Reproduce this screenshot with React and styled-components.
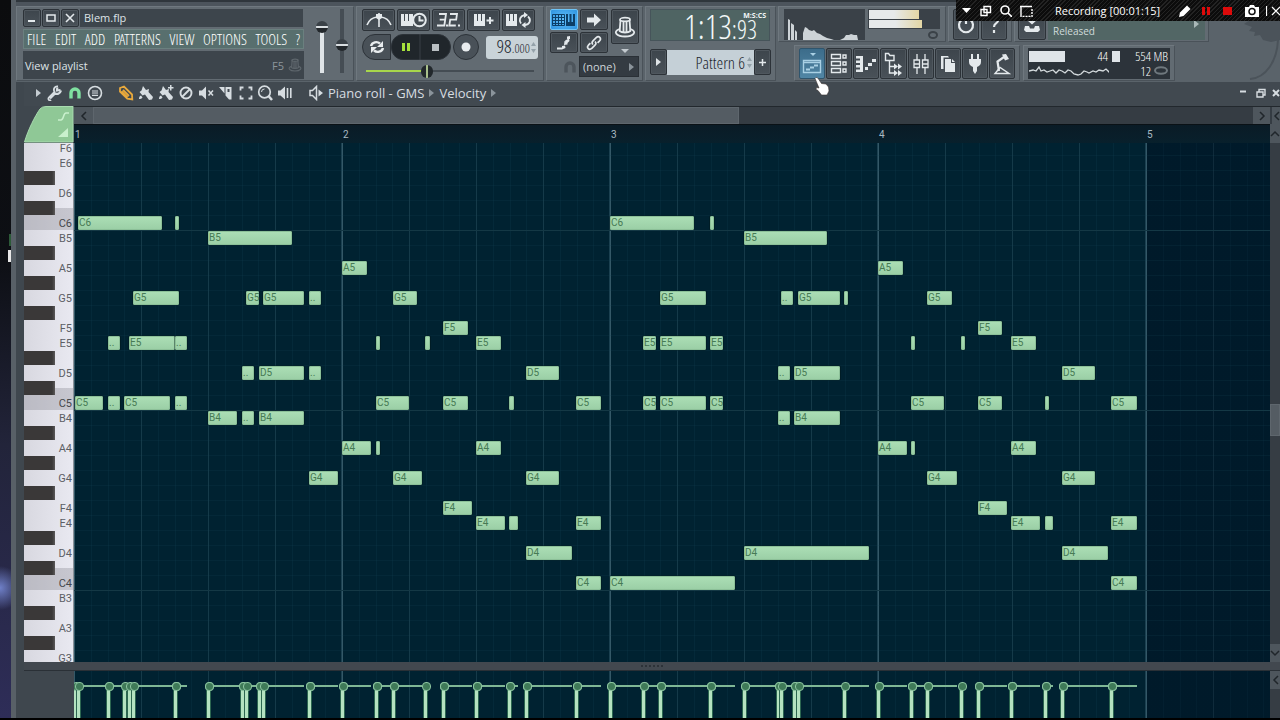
import React from 'react'
import styled, { createGlobalStyle, css } from 'styled-components'

const narrow = "'Open Sans Condensed Light', 'Open Sans ExtraCondensed', 'Noto Sans ExtraCondensed', 'Noto Sans Condensed', 'Roboto Condensed', 'Open Sans Condensed', sans-serif"
const label = "Roboto, 'Liberation Sans', sans-serif"
const ui = "'Open Sans', 'Noto Sans', sans-serif"

const GlobalStyle = createGlobalStyle`
  * { box-sizing: border-box; }
  body { margin: 0; background: #000; overflow: hidden; }
  button, input, select { margin: 0; padding: 0; border: 0; font: inherit; color: inherit; background: none; outline: none; }
  svg { display: block; flex: none; }
`

/* ---------- data ---------- */

const PITCHES = [
  'F6', 'E6', 'D#6', 'D6', 'C#6', 'C6',
  'B5', 'A#5', 'A5', 'G#5', 'G5', 'F#5', 'F5', 'E5', 'D#5', 'D5', 'C#5', 'C5',
  'B4', 'A#4', 'A4', 'G#4', 'G4', 'F#4', 'F4', 'E4', 'D#4', 'D4', 'C#4', 'C4',
  'B3', 'A#3', 'A3', 'G#3', 'G3',
]

// [start, length] at 268px per bar
const NOTES = {
  C6: [[4, 84], [101, 4], [536, 84], [636, 4]],
  B5: [[134, 84], [670, 83]],
  A5: [[268, 25], [804, 25]],
  G5: [[59, 46], [172, 13], [189, 41], [235, 12], [319, 24], [586, 46], [707, 12], [724, 42], [770, 4], [853, 25]],
  F5: [[369, 25], [904, 24]],
  E5: [[34, 12], [55, 46], [101, 12], [302, 4], [351, 5], [402, 25], [569, 13], [586, 46], [636, 13], [837, 4], [887, 4], [937, 25]],
  D5: [[168, 12], [185, 45], [235, 12], [452, 33], [704, 12], [720, 46], [988, 33]],
  C5: [[1, 28], [34, 12], [50, 46], [101, 12], [302, 33], [369, 25], [435, 5], [502, 25], [569, 13], [586, 46], [636, 13], [837, 33], [904, 24], [971, 4], [1037, 26]],
  B4: [[134, 29], [168, 12], [185, 45], [704, 12], [720, 46]],
  A4: [[268, 29], [302, 4], [402, 25], [804, 29], [837, 4], [937, 25]],
  G4: [[235, 29], [319, 29], [452, 33], [853, 30], [988, 33]],
  F4: [[369, 29], [904, 29]],
  E4: [[402, 29], [435, 9], [502, 25], [937, 29], [971, 8], [1037, 26]],
  D4: [[452, 46], [670, 125], [988, 46]],
  C4: [[502, 25], [536, 125], [1037, 26]],
}

const noteLabel = (pitch, length) => (length < 12 ? '' : length === 12 ? '..' : pitch)

/* ---------- shell ---------- */

const Screen = styled.div`
  position: relative;
  display: flex;
  height: 100vh;
  border-bottom: 2px solid #000;
  background: #3f474e;
  color: #dde3e7;
  font-family: ${ui};
  font-size: 11px;
  overflow: hidden;
`

const Desktop = styled.div`
  flex: 0 0 11px;
  background:
    linear-gradient(#e8e8e8, #e8e8e8) 8px 250px / 3px 12px no-repeat,
    linear-gradient(#2c5a38, #2c5a38) 9px 234px / 2px 12px no-repeat,
    radial-gradient(circle at 0 588px, #6f80c8 0, transparent 22px),
    linear-gradient(#0b0c0e 0, #0d0f14 36%, #22243a 62%, #2e2d58 100%);
`

const Studio = styled.main`
  flex: 1;
  min-width: 0;
  display: flex;
  flex-direction: column;
  border-left: 5px solid #586067;
`

/* ---------- main toolbar ---------- */

const Toolbar = styled.header`
  display: flex;
  flex: 0 0 82px;
  gap: 2px;
  border-top: 2px solid #2f363c;
  padding-top: 4px;
  background: linear-gradient(#4c545c 0 4px, #5a636a 4px);
  overflow: hidden;
`

const Panel = styled.section`
  display: flex;
  flex: none;
  flex-direction: ${p => (p.$column ? 'column' : 'row')};
  gap: ${p => p.$gap || 2}px;
  padding: ${p => p.$pad || '2px 4px'};
  width: ${p => (p.$width ? p.$width + 'px' : 'auto')};
  height: ${p => (p.$half ? '36px' : '75px')};
  background: #626b72;
  border: 1px solid #6f787f;
  border-right-color: #4a5259;
  border-bottom-color: #4a5259;
`

const Column = styled.div`
  display: flex;
  flex-direction: column;
  flex: none;
  gap: ${p => p.$gap || 0}px;
`

const Line = styled.div`
  display: flex;
  align-items: ${p => p.$align || 'center'};
  justify-content: ${p => (p.$end ? 'flex-end' : 'flex-start')};
  gap: ${p => p.$gap || 0}px;
  padding-left: ${p => p.$indent || 0}px;
  color: ${p => p.$color || 'inherit'};
`

const Tool = styled.button`
  display: flex;
  flex: none;
  align-items: center;
  justify-content: center;
  width: ${p => p.$w}px;
  height: ${p => p.$h}px;
  border: 1px solid #2c3238;
  border-radius: 2px;
  background: linear-gradient(#3d454c, #495158);
  box-shadow: inset 0 0 0 1px #4f575e;
  color: #e4e9ec;
  ${p => p.$on === 'bright' && css`
    background: radial-gradient(#63c0fa, #2e94df);
    border-color: #6fc4f5;
    box-shadow: none;
    color: #0c3f66;
  `}
  ${p => p.$on === 'soft' && css`
    background: linear-gradient(#3c6c8a, #5186a5);
    border-color: #2f556d;
    box-shadow: none;
    color: #a9d0e4;
  `}
`

const Caption = styled.div`
  width: 223px;
  height: 18px;
  padding-left: 4px;
  background: #3d454c;
  line-height: 17px;
`

const Menu = styled.nav`
  display: flex;
  align-items: center;
  justify-content: space-between;
  width: 281px;
  height: 20px;
  padding: 0 3px;
  background: #586f6e;
  border: 1px solid #6b807f;
  font-family: ${narrow};
  font-weight: 300;
  font-size: 15px;
  line-height: 18px;

  a { color: #fff; text-decoration: none; }
`

const Hint = styled.div`
  display: flex;
  align-items: center;
  width: 281px;
  height: 28px;
  padding: 0 2px;
  background: #3d454c;

  span { flex: 1; }
  small { font-size: 11px; color: #8c959b; margin-right: 4px; }
`

const Fader = styled.input.attrs({ type: 'range' })`
  appearance: none;
  writing-mode: vertical-lr;
  direction: rtl;
  width: 16px;
  height: 64px;
  background: linear-gradient(#454d54, #454d54) center / 4px 100% no-repeat;
  ${p => p.$lit && css`
    background: linear-gradient(transparent 14px, #dfe4e7 14px) center / 4px 100% no-repeat;
  `}

  &::-webkit-slider-thumb {
    appearance: none;
    width: 12px;
    height: 12px;
    border-radius: 6px;
    background: linear-gradient(#3a4147 0 5px, #d9dee1 5px 7px, #22272b 7px);
  }
`

const TempoSlider = styled.input.attrs({ type: 'range' })`
  appearance: none;
  width: 168px;
  height: 14px;
  margin: 1px 0 0 4px;
  background: linear-gradient(90deg, #a8d64b 60px, #444c53 60px) center / 100% 2px no-repeat;

  &::-webkit-slider-thumb {
    appearance: none;
    width: 12px;
    height: 13px;
    border-radius: 6px;
    background: linear-gradient(90deg, #22282c 0 5px, #a9c08c 5px 7px, #22282c 7px);
  }
`

const Transport = styled.button`
  display: flex;
  align-items: center;
  justify-content: center;
  width: ${p => p.$w}px;
  height: 26px;
  background: ${p => (p.$dark ? '#20262b' : '#495158')};
  border: 1px solid #2c3238;
  border-radius: ${p => p.$round};
  color: ${p => p.$color || '#e8ecee'};
`

const Lcd = styled.button`
  display: flex;
  align-items: center;
  justify-content: flex-end;
  gap: 1px;
  width: 52px;
  height: 23px;
  margin-left: 7px;
  padding-right: 2px;
  border-radius: 3px;
  background: #c9d3d8;
  color: #1c262e;
  font-family: ${narrow};
  font-weight: 300;
  font-size: 19px;
  line-height: 23px;

  small { font-size: 13px; }
`

const Snap = styled.div`
  position: relative;

  svg { position: absolute; right: 5px; top: 7px; pointer-events: none; }
`

const Select = styled.select`
  appearance: none;
  width: 60px;
  height: 21px;
  padding-left: 3px;
  border: 1px solid #2a3036;
  background: #343b42;
  color: #cfd6da;
`

const Clock = styled.time`
  display: flex;
  align-items: baseline;
  justify-content: flex-end;
  position: relative;
  width: 120px;
  height: 32px;
  padding-right: 12px;
  border: 1px solid #46545a;
  background: #4f6463;
  color: #f2f8f8;
  font-family: ${narrow};
  font-weight: 300;
  font-size: 34px;
  line-height: 32px;

  small { font-size: 25px; line-height: 20px; }
  sup {
    position: absolute;
    top: 2px;
    right: 3px;
    font: bold 7px/7px ${ui};
  }
`

const PatternField = styled.label`
  display: flex;
  align-items: center;
  gap: 2px;
  width: 87px;
  height: 25px;
  padding-right: 2px;
  background: #c5d0d7;
`

const PatternName = styled.input`
  flex: 1;
  min-width: 0;
  color: #1c262e;
  font-family: ${narrow};
  font-weight: 300;
  font-size: 17px;
  line-height: 25px;
  text-align: right;
`

const Scope = styled.div`
  display: flex;
  align-items: flex-end;
  width: 81px;
  height: 31px;
  background: #3a4148;
`

const Meters = styled.div`
  display: flex;
  flex-direction: column;
  gap: 1px;
  width: 72px;
  height: 22px;
  padding: 1px;
  background: #3a4148;
`

const Meter = styled.div`
  flex: 1;
  width: ${p => p.$w}px;
  background: linear-gradient(90deg, #e6e9ea 50%, #e3d6a4);
`

const News = styled.div`
  display: flex;
  align-items: flex-end;
  justify-content: space-between;
  width: 157px;
  height: 31px;
  padding: 0 6px 1px 5px;
  background: #526665;
  color: #d0dbdb;
  font-size: 10px;
  line-height: 16px;

  svg { margin-bottom: 11px; }
`

const Cpu = styled.div`
  display: grid;
  grid-template-columns: 36px 43px 4px 8px 1fr;
  grid-template-rows: 14px 15px;
  align-items: center;
  width: 142px;
  height: 31px;
  padding: 1px 2px 1px 1px;
  background: #2c333a;
  font-family: ${narrow};
  font-weight: 300;
  font-size: 13px;
  line-height: 14px;
  color: #fff;
  text-align: right;
`

const CpuWide = styled.div`
  grid-column: span 3;
`

const Block = styled.div`
  height: 11px;
  background: #dfe4e8;
`

const Fruit = styled.div`
  margin-left: auto;
`

/* ---------- recorder bar ---------- */

const Recorder = styled.aside`
  position: absolute;
  z-index: 2;
  top: 0;
  right: 0;
  display: flex;
  align-items: center;
  width: 324px;
  height: 21px;
  padding-left: 6px;
  background: repeating-linear-gradient(135deg, #0c0c0c 0 2px, #232323 2px 3px);
  color: #fff;
  overflow: hidden;

  p { margin: 0 17px 0 15px; width: 106px; white-space: nowrap; }
`

const RecorderButton = styled.button`
  display: flex;
  justify-content: center;
  flex: none;
  width: ${p => p.$w || 20}px;
`

const Pointer = styled.div`
  position: absolute;
  z-index: 3;
  left: 814px;
  top: 77px;
`

/* ---------- piano roll ---------- */

const RollBar = styled.div`
  display: flex;
  align-items: center;
  flex: 0 0 24px;
  margin-left: 8px;
  padding: 0 0 2px 7px;
  background: #414950;
  color: #d7dde1;
  font-size: 13px;
  line-height: 20px;
  white-space: nowrap;
`

const RollTool = styled.button`
  display: flex;
  align-items: center;
  justify-content: center;
  flex: none;
  width: ${p => p.$w || 20}px;
  height: 20px;
  color: ${p => p.$color || '#d7dde1'};
`

const Gap = styled.div`
  flex: ${p => (p.$w ? `0 0 ${p.$w}px` : p.$grow || '1')};
`

const Roll = styled.div`
  flex: 1;
  min-height: 0;
  display: grid;
  grid-template-columns: 50px minmax(0, 1fr) 10px;
  grid-template-rows: 18px 19px minmax(0, 1fr) 9px 47px;
  margin-left: 8px;
  background: #3f474e;
`

const Corner = styled.div`
  grid-row: span 2;
`

const ScrollRow = styled.div`
  display: flex;
  background: #353c43;
  border-top: 1px solid #22282d;
`

const ScrollButton = styled.button`
  display: flex;
  align-items: center;
  justify-content: center;
  flex: 0 0 ${p => p.$size || 18}px;
  background: #4e565d;
  color: #20262b;
  overflow: hidden;
`

const ScrollThumb = styled.div`
  width: ${p => p.$w || 'auto'};
  height: ${p => p.$h || 'auto'};
  background: #545c63;
  border: 1px solid #5e666d;
`

const ScrollColumn = styled.div`
  display: flex;
  flex-direction: column;
  background: #363d44;
`

const Ruler = styled.div`
  display: flex;
  background: linear-gradient(#0a1b26, #08202c);
  border-top: 1px solid #0a1116;
  overflow: hidden;
`

const Bar = styled.span`
  flex: 0 0 268px;
  padding-left: 1px;
  color: #a9bac3;
  font-family: ${label};
  font-size: 10px;
  line-height: 19px;
`

const Keys = styled.div`
  overflow: hidden;
  background: linear-gradient(90deg, #d8d8e0, #e9e9f1);
  border-right: 1px solid #8a929a;
`

const Key = styled.div`
  display: flex;
  justify-content: flex-end;
  height: 15px;
  padding-right: 1px;
  color: #5c5f65;
  font-family: ${label};
  font-size: 11px;
  line-height: 17px;

  &:first-child { margin-top: -3px; }

  ${p => p.$octave && css`
    background: rgba(120, 120, 130, 0.3);
    color: #44474c;
  `}
  ${p => p.$sharp && css`
    background: linear-gradient(90deg, #3a3838 28px, #5a5858 31px, transparent 31px) 0 1px / 100% 14px no-repeat;
  `}
  ${p => p.$overOctave && css`
    background:
      linear-gradient(90deg, #3a3838 28px, #5a5858 31px, transparent 31px) 0 1px / 100% 14px no-repeat,
      linear-gradient(transparent 8px, rgba(120, 120, 130, 0.3) 8px);
  `}
`

const gridLines = css`
  background:
    linear-gradient(90deg, transparent 1073px, rgba(0, 8, 26, 0.3) 1073px),
    repeating-linear-gradient(90deg, #345867 0 1px, transparent 1px 267px, #1b4050 267px 268px),
    repeating-linear-gradient(90deg, #153a49 0 1px, transparent 1px 67px),
    repeating-linear-gradient(90deg, transparent 0 17px, #042939 17px 18px, transparent 18px 34px, #042939 34px 35px, transparent 35px 50px, #042939 50px 51px, transparent 51px 67px),
    #002231;
`

const Grid = styled.div`
  ${gridLines}
  overflow: hidden;
`

const Lane = styled.div`
  position: relative;
  height: 15px;
  border-top: 1px solid ${p => (p.$octave ? '#143845' : 'rgba(20, 70, 90, 0.18)')};

  &:first-child { margin-top: -3px; }
`

const Note = styled.div`
  position: absolute;
  top: 0;
  height: 14px;
  padding-left: 1px;
  border-radius: 2px;
  background: linear-gradient(#acdfb6, #9acea5);
  box-shadow: inset 0 0 0 1px #8cc098, 0 0 0 1px rgba(0, 20, 20, 0.35);
  color: #477a54;
  font-family: ${label};
  font-size: 10px;
  line-height: 14px;
  white-space: nowrap;
`

const Splitter = styled.div`
  grid-column: 1 / -1;
  display: flex;
  justify-content: center;
  align-items: center;
  background: #42484f;
  border-bottom: 1px solid #2a3036;

  span { width: 22px; border-top: 2px dotted #2c3238; }
`

const Velocity = styled.div`
  ${gridLines}
  position: relative;
  overflow: hidden;
`

const Stem = styled.div`
  position: absolute;
  top: 14px;
  bottom: 0;
  border-top: 2px solid #7fb795;

  &::before {
    content: '';
    position: absolute;
    top: 2px;
    bottom: 0;
    left: -1px;
    width: 3px;
    background: #b4e2c0;
    box-shadow: 0 0 0 1px #2c6650;
  }
  &::after {
    content: '';
    position: absolute;
    top: -5px;
    left: -3px;
    width: 7px;
    height: 7px;
    border: 1px solid #8cc4a0;
    border-radius: 4px;
    background: #3f7a58;
  }
`

const Taskbar = styled.div`
  position: absolute;
  left: 384px;
  bottom: -2px;
  width: 34px;
  height: 2px;
  background: #3c3c3e;
`

/* ---------- icons ---------- */

const Icon = ({ w = 16, h = 16, fill = 'none', sw = 2, children }) => (
  <svg width={w} height={h} viewBox={`0 0 ${w} ${h}`} fill={fill} stroke={fill === 'none' ? 'currentColor' : 'none'} strokeWidth={sw}>
    {children}
  </svg>
)

const Caret = ({ color = '#8b949b' }) => (
  <svg width="5" height="8" viewBox="0 0 5 8"><path d="M0 0L5 4L0 8Z" fill={color} /></svg>
)

const Spin = () => (
  <svg width="5" height="11" viewBox="0 0 5 11" fill="#94a2aa"><path d="M0 4L2.500 0L5 4ZM0 7L2.500 11L5 7Z" /></svg>
)

const Metronome = () => (
  <Icon w={26} h={16} sw={1.6}>
    <path d="M1 13C3 8 7 5.500 11 5M25 13C23 8 19 5.500 15 5M13 1V15" />
    <path d="M10 2h6v4l-3 2l-3-2z" fill="currentColor" stroke="none" />
  </Icon>
)
const WaitInput = () => (
  <Icon w={26} h={16} sw={2}>
    <path d="M0 2h3v7h1v-7h3v7h1v-7h4v12h-12z" fill="currentColor" stroke="none" />
    <circle cx="18.500" cy="8" r="6.300" fill="#414950" /><path d="M18.500 4v4.500h4" />
  </Icon>
)
const Countdown = () => (
  <Icon w={26} h={16} sw={1.800}>
    <path d="M3 2h7l-.8 5.700h-5.500M9.200 7.700l-.9 5.800h-7.300M14 2h7l-.8 5.700h-6l-.9 5.800h6.500" />
    <path d="M10 12.500h2v2h-2zM22 12.500h2v2h-2z" fill="currentColor" stroke="none" />
  </Icon>
)
const Overdub = () => (
  <Icon w={22} h={16}>
    <path d="M1 2h3v7h1v-7h3v7h1v-7h3v12h-11z" fill="currentColor" stroke="none" />
    <path d="M13.500 8.500h7M17 5v7" />
  </Icon>
)
const LoopRec = () => (
  <Icon w={26} h={16} sw={1.800}>
    <path d="M0 2h3v7h1v-7h3v7h1v-7h3v12h-11z" fill="currentColor" stroke="none" />
    <path d="M15 11.500C12.500 8 14 4 18.500 3M22 4.500C25.500 7.500 24 12.500 19 13" />
    <path d="M18 0l4 3l-4 3zM19.500 10v6l-4-3z" fill="currentColor" stroke="none" />
  </Icon>
)
const TypingKeys = () => (
  <Icon w={24} h={14} sw={1}>
    <path d="M.5 1.500h12v11h-12zM3.500 1.500v11M6.500 1.500v11M9.500 1.500v11M.5 4.500h12M.5 7.500h12M.5 10.500h12" />
    <path d="M14 1h2v8h1.500v-8h2v8h1.500v-8h2v12h-9z" fill="currentColor" stroke="none" />
  </Icon>
)
const StepArrow = () => <Icon w={16} h={14} fill="currentColor"><path d="M1 4.500h7v-4l7 6.500l-7 6.500v-4h-7z" /></Icon>
const Slide = () => (
  <Icon w={18} h={16} fill="currentColor">
    <path d="M2 12.500h5v2h-5zM7 14.500v-3.500l3-.5l.5 2.500zM9 10l.5-4l3 .5v3zM10 5.500l4-2l.5 2.500l-2 2zM12 1.500l3-.5v3h-3z" />
  </Icon>
)
const Link = () => (
  <Icon w={16} h={16} sw={1.700}>
    <path d="M7 9.500C5.500 8 6 6.800 7 5.800l3.200-3.200c2.800-2.300 5.600.7 3.400 3.200l-2 2" />
    <path d="M9 6.500C10.500 8 10 9.200 9 10.200l-3.200 3.200c-2.800 2.300-5.600-.7-3.400-3.200l2-2" />
  </Icon>
)
const Hat = ({ color = 'currentColor', w = 22 }) => (
  <svg width={w} height={w} viewBox="0 0 22 22" fill="none" stroke={color} strokeWidth="1.800">
    <ellipse cx="11" cy="3.500" rx="5" ry="1.800" />
    <path d="M6.500 4l-.8 11c2 2 8.600 2 10.600 0l-.8-11M9.500 6v10M12.500 6v10" />
    <path d="M5.500 13C-2 16 3 20.500 11 20.500S24 16 16.500 13" />
  </svg>
)
const Magnet = () => (
  <Icon w={14} h={14} sw={3.400}><path d="M3 12.500V7a4 4 0 0 1 8 0v5.500" /></Icon>
)

const PlaylistIcon = () => (
  <Icon w={20} h={24} sw={1.400}>
    <path d="M8 1h6l-3 3z" fill="currentColor" stroke="none" />
    <path d="M1.500 8.500h17v12h-17zM1.500 10.500h17" /><path d="M4 17.500h4M8 15.500h4M12 13.500h4" strokeWidth="2" />
  </Icon>
)
const ChannelIcon = () => (
  <Icon w={18} h={22} sw={1.400}>
    <path d="M1.500 1.500h9v4h-9zM1.500 8.500h9v4h-9zM1.500 15.500h9v4h-9zM13 2h3v3h-3zM13 9h3v3h-3zM13 16h3v3h-3z" />
  </Icon>
)
const PianoRollIcon = () => (
  <Icon w={22} h={18} fill="currentColor">
    <path d="M1 1h7v16h-7v-2.500h4v-2h-4v-2.500h4v-2h-4v-2.500h4v-2h-4zM10 12h3v3h-3zM13 8h4v3h-4zM17 4h4v3h-4z" />
  </Icon>
)
const BrowserIcon = () => (
  <Icon w={20} h={24} sw={1.400}>
    <path d="M1.500 1.500h3l1.500 2h4v5h-8.500zM5.500 9v12h5M5.500 14.500h5" />
    <path d="M10 11.500v6l4-3zM14 11.500v6l4-3zM10 18v6l4-3zM14 18v6l4-3z" fill="currentColor" stroke="none" />
  </Icon>
)
const MixerIcon = () => (
  <Icon w={16} h={22} sw={1.300}>
    <path d="M4 1v6M4 15v6M12 1v6M12 15v6M1 7h5.500v7.500h-5.500zM9.500 7h5.500v7.500h-5.500zM1 11h5.500M9.500 11h5.500" />
  </Icon>
)
const ProjectIcon = () => (
  <Icon w={16} h={20}>
    <path d="M1 2h7l1 1.500h-5.500v11.500h-2.500z" fill="currentColor" stroke="none" />
    <path d="M5 5h6v4h4v9h-10zM12 5l3 3h-3z" fill="currentColor" stroke="none" />
  </Icon>
)
const PlugIcon = () => (
  <Icon w={14} h={22} fill="currentColor">
    <path d="M3 1h2v5h4v-5h2v5h2v3c0 3-2 4-4 5v4l-2 3l-2-3v-4c-2-1-4-2-4-5v-3h2z" />
  </Icon>
)
const TouchIcon = () => (
  <Icon w={18} h={22} sw={2.200}>
    <path d="M11 4L4.500 8.500L6 18" /><path d="M9 1.500l4-.5l3 5l-4 1.500z" fill="currentColor" stroke="none" />
    <path d="M2 20.500h14l-9-6z" strokeWidth="1.400" />
  </Icon>
)
const PowerIcon = () => (
  <Icon w={18} h={18} sw={2.200}><path d="M5 3.500A7 7 0 1 0 13 3.500M9 1v7" /></Icon>
)
const HelpIcon = () => (
  <Icon w={14} h={20} sw={2.200}><path d="M2 5C3 0 12 1 11 6C10 9 7 8 7 12M7 15v3" /></Icon>
)
const UpdateIcon = () => (
  <Icon w={18} h={18} fill="currentColor">
    <path d="M7 0h4v4h3l-5 4.500l-5-4.500h3zM2 10h4l1 2.500h4l1-2.500h4l1 4l-2 2h-12l-2-2z" />
  </Icon>
)

const Wrench = () => (
  <Icon sw={2.600}>
    <path d="M14 5.500C13 9 10 9.500 8 8.500L3 13.500M13.500 5l-3.500.5l.3-3" strokeWidth="2.200" />
    <path d="M11 1.500C7.500 1 6 4 7.500 7L2 12.500a1.500 1.500 0 0 0 2 2.500" strokeWidth="1.800" />
  </Icon>
)
const MenuRound = () => <Icon sw={1.600}><circle cx="8" cy="8" r="6.500" /><path d="M5 6h6M5 8h6M5 10.300h6" strokeWidth="1.200" /></Icon>
const Pencil = () => (
  <Icon sw={1.800}><path d="M2 3l4-1.500l8 8l.3 5l-5-.8L2 6.500zM5 5l6 6M3.500 6.500l6 6" /></Icon>
)
const Brush = ({ plus }) => (
  <Icon fill="currentColor">
    <path d="M5 1l3 4l3-1l-.5 3l4.500 5l-1 2.500l-3 .5l-4-5.500l-2.500 1l-3-3.500l2-1.500z" />
    <path d="M1 14c0-2 .5-3 2-3.500l1.500 2c-.8 1.200-2 1.500-3.500 1.500z" />
    {plus && <path d="M12 0h1.500v2h2v1.500h-2v2h-1.500v-2h-2v-1.500h2z" />}
  </Icon>
)
const Slash = () => <Icon sw={1.900}><circle cx="8" cy="8" r="5.500" /><path d="M4 12L12 4" /></Icon>
const Mute = () => (
  <Icon sw={1.500}><path d="M1 5.500h3l4-4v13l-4-4h-3z" fill="currentColor" stroke="none" /><path d="M10.500 5.500l4.500 5M15 5.500l-4.500 5" /></Icon>
)
const Slice = () => (
  <Icon fill="currentColor"><path d="M1 2h5.500v6.500zM7.500 2h6v12.500h-2.500l-3.500-4zM9.500 4v3h2v-3z" fillRule="evenodd" /></Icon>
)
const Marquee = () => <Icon sw={1.800}><path d="M2.500 5.500v-3h3M10.500 2.500h3v3M13.500 10.500v3h-3M5.500 13.500h-3v-3" /></Icon>
const Zoom = () => (
  <Icon sw={1.700}><circle cx="7.500" cy="7" r="5.800" /><path d="M11.500 11l3.500 4" strokeWidth="2.500" /><path d="M4.500 7a3 3 0 0 1 3-3" strokeWidth="1" /></Icon>
)
const Playback = () => (
  <Icon sw={1.600}><path d="M1 5.500h2.500l4.500-4v13l-4.500-4h-2.500z" fill="currentColor" stroke="none" /><path d="M10.500 3v10M13.800 3v10" /></Icon>
)
const SpeakerOut = () => (
  <Icon sw={1.500}><path d="M2 5.500h2.500l4-4v13l-4-4h-2.500z" /><path d="M10.500 4.500l4.500 3.500l-4.500 3.500z" fill="currentColor" stroke="none" /></Icon>
)
const Chevron = ({ d }) => <Icon w={10} h={10} sw={1.500}><path d={d} /></Icon>

const Spectrum = () => (
  <svg width="81" height="31" viewBox="0 0 81 31" fill="#cdd3d7">
    <path d="M4 31V10l2 1v20zM7 31V14l3 2v15zM11 31V21l2 2v8zM19 31V24l2-6l2 1l2 2l3 1l2-1l3 3l3 1l3 2l4 2l4 1l3 1zM56 31l4-2l2-3l3 0l2-1l3 1h3l1 5z" />
  </svg>
)

const CpuGraph = () => (
  <svg width="80" height="12" viewBox="0 0 80 12" fill="none" stroke="#d5dbde" strokeWidth="1.300">
    <path d="M0 6l4-1l3 1l3-4l2 4l3-1l3 2l3-1l3-1l3 3l3-3l3 1l3 2l3-3l3 1l3 3l4 1l3-1l3-3l3 1l2 1l4-2l3 1l3-2l4 1l3-2l3 3l1-2" />
  </svg>
)

/* ---------- parts ---------- */

const HeaderBar = () => (
  <Toolbar>
    <Panel $column $gap={3} $pad="2px 3px 2px 6px">
      <Line $gap={10} $align="flex-start">
        <Column $gap={2}>
          <Line $gap={1}>
            <Tool $w={18} $h={18} aria-label="Minimize"><Icon w={10} h={10}><path d="M1 8h7" /></Icon></Tool>
            <Tool $w={18} $h={18} aria-label="Maximize"><Icon w={10} h={10} sw={1.500}><path d="M1 2h8v6h-8z" /></Icon></Tool>
            <Tool $w={18} $h={18} aria-label="Close"><Icon w={10} h={10} sw={1.600}><path d="M1 1l8 8M9 1l-8 8" /></Icon></Tool>
            <Caption>Blem.flp</Caption>
          </Line>
          <Menu>
            {['FILE', 'EDIT', 'ADD', 'PATTERNS', 'VIEW', 'OPTIONS', 'TOOLS', '?'].map(item => (
              <a key={item} href="#menu">{item}</a>
            ))}
          </Menu>
          <Hint>
            <span>View playlist</span>
            <small>F5</small>
            <Hat color="#5f676d" w={14} />
          </Hint>
        </Column>
        <Line $gap={4}>
          <Fader $lit aria-label="Main volume" defaultValue={76} />
          <Fader aria-label="Main pitch" defaultValue={42} />
        </Line>
      </Line>
    </Panel>

    <Panel $column $gap={3} $pad="2px 5px">
      <Line $gap={2}>
        <Tool $w={33} $h={22} aria-label="Metronome"><Metronome /></Tool>
        <Tool $w={33} $h={22} aria-label="Wait for input"><WaitInput /></Tool>
        <Tool $w={33} $h={22} aria-label="Countdown"><Countdown /></Tool>
        <Tool $w={33} $h={22} aria-label="Overdub"><Overdub /></Tool>
        <Tool $w={33} $h={22} aria-label="Loop recording"><LoopRec /></Tool>
      </Line>
      <Line>
        <Transport $w={29} $round="13px 0 0 13px" aria-label="Song mode">
          <Icon sw={2.400}><path d="M2 7C3 3 8 2 11 4.500M14 9C13 13 8 14 5 11.500" /><path d="M14 2v6h-6zM2 14v-6h6z" fill="currentColor" stroke="none" /></Icon>
        </Transport>
        <Transport $w={29} $dark $round="12px 0 0 12px" $color="#a6e03c" aria-label="Pause">
          <Icon w={8} h={8} fill="currentColor"><path d="M0 0h3v8h-3zM5 0h3v8h-3z" /></Icon>
        </Transport>
        <Transport $w={31} $dark $round="0 13px 13px 0" $color="#b9bfc3" aria-label="Stop">
          <Icon w={7} h={7} fill="currentColor"><path d="M0 0h7v7h-7z" /></Icon>
        </Transport>
        <Gap $w={2} />
        <Transport $w={26} $round="13px" aria-label="Record">
          <Icon w={10} h={10} fill="currentColor"><circle cx="5" cy="5" r="4.500" /></Icon>
        </Transport>
        <Lcd aria-label="Tempo"><span>98<small>.000</small></span><Spin /></Lcd>
      </Line>
      <TempoSlider aria-label="Song position" defaultValue={35} />
    </Panel>

    <Panel $column $gap={3} $pad="2px 3px">
      <Line $gap={3} $align="flex-start">
        <Column $gap={2}>
          <Line $gap={2}>
            <Tool $w={28} $h={21} $on="bright" aria-label="Typing keyboard"><TypingKeys /></Tool>
            <Tool $w={28} $h={21} aria-label="Step edit"><StepArrow /></Tool>
          </Line>
          <Line $gap={2}>
            <Tool $w={28} $h={21} aria-label="Slide"><Slide /></Tool>
            <Tool $w={28} $h={21} aria-label="Link"><Link /></Tool>
          </Line>
        </Column>
        <Column $gap={5}>
          <Tool $w={28} $h={35} aria-label="Content"><Hat /></Tool>
          <Line $indent={10}><Icon w={8} h={4} fill="#c3cacf"><path d="M0 0h8l-4 4z" /></Icon></Line>
        </Column>
      </Line>
      <Line $indent={13} $gap={2} $color="#4d555c">
        <Magnet />
        <Snap>
          <Select aria-label="Snap"><option>(none)</option></Select>
          <Caret />
        </Snap>
      </Line>
    </Panel>

    <Panel $column $gap={8} $pad="2px 4px">
      <Clock>1:13<small>:93</small><sup>M:S:CS</sup></Clock>
      <Line>
        <Tool $w={17} $h={26} aria-label="Pattern menu"><Caret color="#dfe4e7" /></Tool>
        <PatternField>
          <PatternName aria-label="Pattern" defaultValue="Pattern 6" />
          <Spin />
        </PatternField>
        <Tool $w={17} $h={26} aria-label="Add pattern"><Icon w={9} h={9} sw={1.500}><path d="M4.500 1v7M1 4.500h7" /></Icon></Tool>
      </Line>
    </Panel>

    <Column $gap={3}>
      <Line $gap={2}>
        <Panel $half $gap={3} $pad="2px 5px" $width={168}>
          <Scope><Spectrum /></Scope>
          <Column $gap={2}>
            <Meters><Meter $w={50} /><Meter $w={53} /></Meters>
            <Line $indent={60}><Icon w={10} h={8} sw={2}><ellipse cx="5" cy="4" rx="4" ry="3" stroke="#3b4248" /></Icon></Line>
          </Column>
        </Panel>
        <Panel $half $gap={2} $pad="2px 4px">
          <Tool $w={26} $h={31} aria-label="Exit"><PowerIcon /></Tool>
          <Tool $w={26} $h={31} aria-label="Help"><HelpIcon /></Tool>
        </Panel>
        <Panel $half $gap={2} $pad="2px 3px">
          <Tool $w={28} $h={31} aria-label="Updates"><UpdateIcon /></Tool>
          <News>Released<Caret color="#a9b8b8" /></News>
        </Panel>
      </Line>
      <Line $indent={16} $gap={3}>
        <Panel $half $gap={1} $pad="2px 4px">
          <Tool $w={26} $h={31} $on="soft" aria-label="Playlist"><PlaylistIcon /></Tool>
          <Tool $w={26} $h={31} aria-label="Channel rack"><ChannelIcon /></Tool>
          <Tool $w={26} $h={31} aria-label="Piano roll"><PianoRollIcon /></Tool>
          <Tool $w={27} $h={31} aria-label="Browser"><BrowserIcon /></Tool>
          <Tool $w={26} $h={31} aria-label="Mixer"><MixerIcon /></Tool>
          <Tool $w={26} $h={31} aria-label="Project"><ProjectIcon /></Tool>
          <Tool $w={26} $h={31} aria-label="Plugins"><PlugIcon /></Tool>
          <Tool $w={26} $h={31} aria-label="Touch"><TouchIcon /></Tool>
        </Panel>
        <Panel $half $pad="2px 4px">
          <Cpu>
            <Block />
            <span>44</span>
            <span />
            <Block />
            <span>554 MB</span>
            <CpuWide><CpuGraph /></CpuWide>
            <span />
            <Line $end $gap={3}>12<Icon w={14} h={9} sw={2}><ellipse cx="7" cy="4.500" rx="6" ry="3.200" stroke="#6f787e" /></Icon></Line>
          </Cpu>
        </Panel>
      </Line>
    </Column>

    <Fruit>
      <svg width="38" height="76" viewBox="0 0 38 76">
        <path d="M2 18l8 3l-3 4l6 1l-1 4l6-1l3 5l8 2l9-2V14H8z" fill="#4b535a" />
        <path d="M36 34C35 55 24 72 8 73" fill="none" stroke="#4b535a" strokeWidth="2" />
      </svg>
    </Fruit>
  </Toolbar>
)

const RecorderBar = () => (
  <Recorder>
    <RecorderButton $w={10} aria-label="Menu"><Icon w={10} h={6} fill="currentColor"><path d="M0 0h9l-4.500 5z" /></Icon></RecorderButton>
    <RecorderButton $w={28} aria-label="Window"><Icon w={12} h={12} sw={1.400}><path d="M1 4.500h6v6h-6zM4 1.500h6.500v6h-6.500z" /></Icon></RecorderButton>
    <RecorderButton $w={12} aria-label="Magnifier"><Icon w={12} h={12} sw={1.600}><circle cx="5" cy="5" r="4" /><path d="M8 8l4 4" /></Icon></RecorderButton>
    <RecorderButton $w={28} aria-label="Region"><Icon w={13} h={12} sw={1.400}><path d="M1 12V1M0 1.500h12" /><path d="M12 4v7.500h-10" strokeDasharray="2 1" /></Icon></RecorderButton>
    <p>Recording [00:01:15]</p>
    <RecorderButton $w={14} aria-label="Draw"><Icon w={14} h={14} fill="currentColor"><path d="M1 13l1-4.500l7-7l3.500 3.500l-7 7z" /></Icon></RecorderButton>
    <RecorderButton $w={28} aria-label="Pause recording"><Icon w={8} h={10} fill="#dd0a0a"><path d="M0 1h3v8h-3zM5 1h3v8h-3z" /></Icon></RecorderButton>
    <RecorderButton $w={16} aria-label="Stop recording"><Icon w={10} h={10} fill="#dd0a0a"><path d="M0 1h9v8h-9z" /></Icon></RecorderButton>
    <RecorderButton $w={32} aria-label="Snapshot"><Icon w={14} h={12}><path d="M0 2h4l1-2h4l1 2h4v10h-14z" fill="currentColor" stroke="none" /><circle cx="7" cy="6.500" r="3" stroke="#111" strokeWidth="1.500" /></Icon></RecorderButton>
    <RecorderButton $w={12} aria-label="Close recorder"><Icon w={16} h={10} sw={1.200}><path d="M.5 0v10M6 1l8 8M14 1l-8 8" /></Icon></RecorderButton>
  </Recorder>
)

const RollHeader = () => (
  <RollBar>
    <RollTool $w={14} aria-label="Roll menu"><Caret color="#c5ccd1" /></RollTool>
    <RollTool aria-label="Tools"><Wrench /></RollTool>
    <RollTool $color="#7fe0a0" aria-label="Snap"><Magnet /></RollTool>
    <RollTool aria-label="Stamp"><MenuRound /></RollTool>
    <Gap $w={11} />
    <RollTool $color="#e9a93c" aria-label="Draw"><Pencil /></RollTool>
    <RollTool aria-label="Paint"><Brush /></RollTool>
    <RollTool aria-label="Paint sequence"><Brush plus /></RollTool>
    <RollTool aria-label="Delete"><Slash /></RollTool>
    <RollTool aria-label="Mute"><Mute /></RollTool>
    <RollTool aria-label="Slice"><Slice /></RollTool>
    <RollTool $w={19} aria-label="Select"><Marquee /></RollTool>
    <RollTool aria-label="Zoom"><Zoom /></RollTool>
    <RollTool aria-label="Playback"><Playback /></RollTool>
    <Gap $w={11} />
    <RollTool aria-label="Preview"><SpeakerOut /></RollTool>
    <Gap $w={2} />
    <Line $gap={5}>
      <span>Piano roll - GMS</span>
      <Caret />
      <span>Velocity</span>
      <Caret />
    </Line>
    <Gap />
    <RollTool $w={16} aria-label="Minimize roll"><Icon w={8} h={8}><path d="M1 2.500h6" /></Icon></RollTool>
    <RollTool $w={20} aria-label="Restore roll"><Icon w={10} h={10} sw={1.400}><path d="M1 4h6v5h-6zM3 4v-2.500h6v5.500h-2" /></Icon></RollTool>
    <RollTool $w={9} aria-label="Close roll"><Icon w={8} h={8}><path d="M1 1l6 6M7 1l-6 6" /></Icon></RollTool>
  </RollBar>
)

const PianoKeyboard = () => (
  <Keys>
    {PITCHES.map(pitch => (
      <Key
        key={pitch}
        $sharp={pitch.includes('#')}
        $overOctave={pitch.startsWith('C#')}
        $octave={pitch[0] === 'C' && pitch.length === 2}
      >
        {pitch.includes('#') ? '' : pitch}
      </Key>
    ))}
  </Keys>
)

const NoteGrid = () => (
  <Grid>
    {PITCHES.map(pitch => (
      <Lane key={pitch} $octave={pitch[0] === 'B'}>
        {(NOTES[pitch] || []).map(([start, length]) => (
          <Note key={start} style={{ left: start, width: length }}>
            {noteLabel(pitch, length)}
          </Note>
        ))}
      </Lane>
    ))}
  </Grid>
)

const VelocityLane = () => (
  <Velocity>
    {Object.values(NOTES).flat().sort((a, b) => a[0] - b[0]).map(([start, length], i) => (
      <Stem key={i} style={{ left: start, width: length }} />
    ))}
  </Velocity>
)

const App = () => {
  return (
    <Screen>
      <GlobalStyle />
      <Desktop />
      <Studio>
        <HeaderBar />
        <RollHeader />
        <Roll>
          <Corner>
            <svg width="50" height="37" viewBox="0 0 50 37">
              <path d="M.5 36C4 24 11 10 16 3Q18 .5 22 .5H49V36Z" fill="#8fc896" stroke="#a9dcb0" />
              <path d="M34 14h3c3 0 2-7 5-7h3" fill="none" stroke="#c9f0cd" strokeWidth="1.500" />
              <path d="M34 31l10-9v9z" fill="#c9f0cd" />
            </svg>
          </Corner>
          <ScrollRow>
            <ScrollButton $size={19} aria-label="Scroll left"><Chevron d="M7 1L3 5l4 4" /></ScrollButton>
            <ScrollThumb $w="54%" />
            <Gap />
            <ScrollButton $size={17} aria-label="Scroll right"><Chevron d="M3 1l4 4l-4 4" /></ScrollButton>
          </ScrollRow>
          <ScrollRow><Gap $w={2} /><ScrollButton $size={8} aria-label="Zoom out"><Chevron d="M8 1L4 5l4 4" /></ScrollButton></ScrollRow>
          <Ruler>
            {[1, 2, 3, 4, 5].map(bar => <Bar key={bar}>{bar}</Bar>)}
          </Ruler>
          <ScrollButton aria-label="Scroll up"><Chevron d="M1 7l4-4l4 4" /></ScrollButton>
          <PianoKeyboard />
          <NoteGrid />
          <ScrollColumn>
            <Gap $grow={5} />
            <ScrollThumb $h="32px" />
            <Gap $grow={4} />
            <ScrollButton aria-label="Scroll down"><Chevron d="M1 3l4 4l4-4" /></ScrollButton>
          </ScrollColumn>
          <Splitter><span /></Splitter>
          <div />
          <VelocityLane />
          <ScrollColumn>
            <ScrollButton aria-label="Previous control"><Chevron d="M8 1L4 5l4 4" /></ScrollButton>
          </ScrollColumn>
        </Roll>
      </Studio>
      <RecorderBar />
      <Pointer>
        <svg width="16" height="19" viewBox="0 0 16 19">
          <path d="M1 1.500C2-.3 4 .5 4.500 2l3 4.500l4.500.5l2.500 3l.5 4l-2 4h-5.500l-3.500-4.500l-2-1l.5-2l2.500.5z" fill="#fff" stroke="#3a3230" strokeWidth=".6" />
        </svg>
      </Pointer>
      <Taskbar />
    </Screen>
  )
}

export default App
